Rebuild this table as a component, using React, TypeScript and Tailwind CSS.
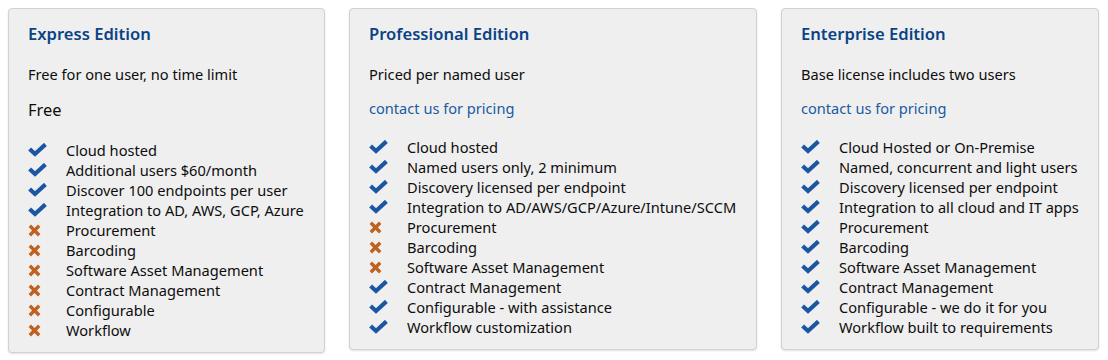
const editions = [
  {
    title: "Express Edition",
    subtitle: "Free for one user, no time limit",
    price: "Free",
    width: "w-[317px]",
    features: [
      ["Cloud hosted", true],
      ["Additional users $60/month", true],
      ["Discover 100 endpoints per user", true],
      ["Integration to AD, AWS, GCP, Azure", true],
      ["Procurement", false],
      ["Barcoding", false],
      ["Software Asset Management", false],
      ["Contract Management", false],
      ["Configurable", false],
      ["Workflow", false],
    ] as [string, boolean][],
  },
  {
    title: "Professional Edition",
    subtitle: "Priced per named user",
    width: "w-[408px]",
    features: [
      ["Cloud hosted", true],
      ["Named users only, 2 minimum", true],
      ["Discovery licensed per endpoint", true],
      ["Integration to AD/AWS/GCP/Azure/Intune/SCCM", true],
      ["Procurement", false],
      ["Barcoding", false],
      ["Software Asset Management", false],
      ["Contract Management", true],
      ["Configurable - with assistance", true],
      ["Workflow customization", true],
    ] as [string, boolean][],
  },
  {
    title: "Enterprise Edition",
    subtitle: "Base license includes two users",
    width: "w-[318px]",
    features: [
      ["Cloud Hosted or On-Premise", true],
      ["Named, concurrent and light users", true],
      ["Discovery licensed per endpoint", true],
      ["Integration to all cloud and IT apps", true],
      ["Procurement", true],
      ["Barcoding", true],
      ["Software Asset Management", true],
      ["Contract Management", true],
      ["Configurable - we do it for you", true],
      ["Workflow built to requirements", true],
    ] as [string, boolean][],
  },
];

function Check() {
  return (
    <svg width="19" height="14" viewBox="0 0 19 14" className="block">
      <path d="M1.6 6 L7 11 L17.4 1.4" fill="none" stroke="#1a56a3" strokeWidth="4.2" />
    </svg>
  );
}

function Cross() {
  return (
    <svg width="13" height="13" viewBox="0 0 13 13" className="block">
      <path d="M1.8 1.8 L11.2 11.2 M11.2 1.8 L1.8 11.2" fill="none" stroke="#bf6220" strokeWidth="3.4" />
    </svg>
  );
}

export default function App() {
  return (
    <div
      className="flex items-start gap-6 pl-2 pt-2 bg-white h-[360px] text-[#0d0d0d]"
      style={{ fontFamily: '"Noto Sans", "Open Sans", sans-serif' }}
    >
      {editions.map((ed) => (
        <div
          key={ed.title}
          className={`${ed.width} shrink-0 rounded-[4px] border border-[#d2d2d2] bg-[#efefef] pl-[19px] pr-3 pt-[13px] pb-3 shadow-[0_1px_2px_rgba(0,0,0,0.12)]`}
        >
          <h2 className="text-[16.6px] leading-6 font-semibold text-[#0a4386]">{ed.title}</h2>
          <p className="mt-[18px] text-[14.6px] leading-5">{ed.subtitle}</p>
          {ed.price ? (
            <p className="mt-[14px] text-[16.4px] leading-6">{ed.price}</p>
          ) : (
            <a className="mt-3 block text-[14.6px] leading-6 text-[#1a5a9e]">contact us for pricing</a>
          )}
          <ul className={ed.price ? "mt-[18px]" : "mt-[17px]"}>
            {ed.features.map(([label, ok]) => (
              <li key={label} className="flex items-center h-5 text-[14.6px] leading-5 whitespace-nowrap">
                <span className="w-[38px] shrink-0 flex items-center">{ok ? <Check /> : <Cross />}</span>
                <span>{label}</span>
              </li>
            ))}
          </ul>
        </div>
      ))}
    </div>
  );
}
